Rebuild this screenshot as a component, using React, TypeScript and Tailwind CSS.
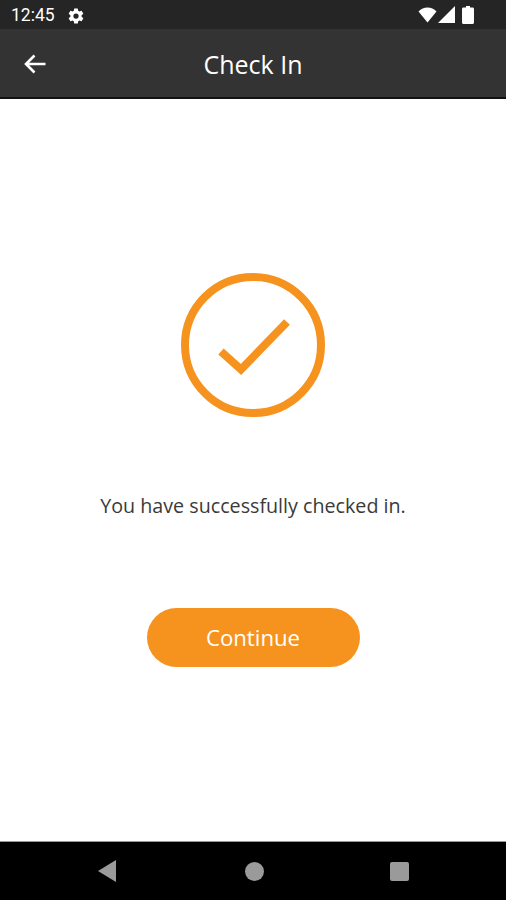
export default function App() {
  return (
    <div className="flex h-[900px] w-[506px] flex-col overflow-hidden bg-white font-['Open_Sans',sans-serif]">
      {/* Status bar */}
      <div className="flex h-[29px] items-center justify-between bg-[#252525] pl-[11px] pr-[32px] text-white">
        <div className="flex items-center gap-[12px] pt-[3px]">
          <span className="font-['Roboto',sans-serif] text-[17.500px] leading-none">12:45</span>
          <svg width="18" height="18" viewBox="0 0 24 24" fill="#fff">
            <path d="M19.4 13c.04-.33.06-.66.06-1s-.02-.67-.06-1l2.1-1.65c.2-.15.25-.42.12-.64l-2-3.46c-.12-.22-.39-.3-.61-.22l-2.49 1c-.52-.4-1.08-.73-1.69-.98l-.38-2.65A.49.49 0 0 0 14 2h-4c-.25 0-.46.18-.49.42l-.38 2.65c-.61.25-1.17.59-1.69.98l-2.49-1c-.23-.09-.49 0-.61.22l-2 3.46c-.13.22-.07.49.12.64L4.57 11c-.04.33-.07.67-.07 1s.03.67.07 1l-2.11 1.65c-.19.15-.25.42-.12.64l2 3.46c.12.22.39.3.61.22l2.49-1c.52.4 1.08.73 1.69.98l.38 2.65c.03.24.24.42.49.42h4c.25 0 .46-.18.49-.42l.38-2.65c.61-.25 1.17-.59 1.69-.98l2.49 1c.23.09.49 0 .61-.22l2-3.46c.12-.22.07-.49-.12-.64L19.4 13zM12 15.5a3.5 3.5 0 1 1 0-7 3.5 3.5 0 0 1 0 7z" />
          </svg>
        </div>
        <div className="flex items-center">
          <svg width="19" height="16" viewBox="0 0 19 16" fill="#fff">
            <path d="M9.500 15.500 0.500 4.500C3 2 6 0.500 9.500 0.500s6.500 1.500 9 4z" />
          </svg>
          <svg className="ml-[1px]" width="17" height="17" viewBox="0 0 17 17" fill="#fff">
            <path d="M17 0v17H0z" />
          </svg>
          <svg className="ml-[7px]" width="12" height="18" viewBox="0 0 12 18" fill="#fff">
            <path d="M4 0h4v1.500h2.500c.8 0 1.500.7 1.500 1.500V16.500c0 .8-.7 1.500-1.500 1.500h-9C.7 18 0 17.300 0 16.500V3C0 2.200.7 1.500 1.500 1.500H4z" />
          </svg>
        </div>
      </div>

      {/* Toolbar */}
      <div className="relative flex h-[70px] shrink-0 items-center justify-center border-b-2 border-[#111] bg-[#333333]">
        <svg className="absolute left-[23px] top-[23px]" width="24" height="24" viewBox="0 0 24 24" fill="none" stroke="#fff" strokeWidth="2.600">
          <path d="M22.500 12H3M11.500 3.500 3 12l8.500 8.500" />
        </svg>
        <span className="mt-[3px] text-[25px] leading-none text-white">Check In</span>
      </div>

      {/* Content */}
      <div className="flex flex-1 flex-col items-center bg-white pt-[173px]">
        <svg width="146" height="146" viewBox="0 0 146 146" fill="none" stroke="#f6931f">
          <circle cx="73" cy="73" r="68" strokeWidth="8" />
          <path d="M41 79.500 L 61 97.500 L 107 50" strokeWidth="8" />
        </svg>
        <p className="mt-[75px] text-[19.700px] leading-[26px] text-[#3a3a3a]">You have successfully checked in.</p>
        <button className="mt-[89px] flex h-[59px] w-[213px] items-center justify-center rounded-full bg-[#f6931f] text-[22.200px] text-white">
          Continue
        </button>
      </div>

      {/* Nav bar */}
      <div className="flex h-[59px] items-center justify-center border-t border-[#999] bg-black">
        <svg width="18" height="22" viewBox="0 0 18 22" fill="#9a9a9a">
          <path d="M18 0v22L0 11z" />
        </svg>
        <div className="ml-[129px] h-[19px] w-[19px] rounded-full bg-[#9a9a9a]" />
        <div className="ml-[126px] h-[19px] w-[19px] rounded-[2px] bg-[#9a9a9a]" />
      </div>
    </div>
  );
}
